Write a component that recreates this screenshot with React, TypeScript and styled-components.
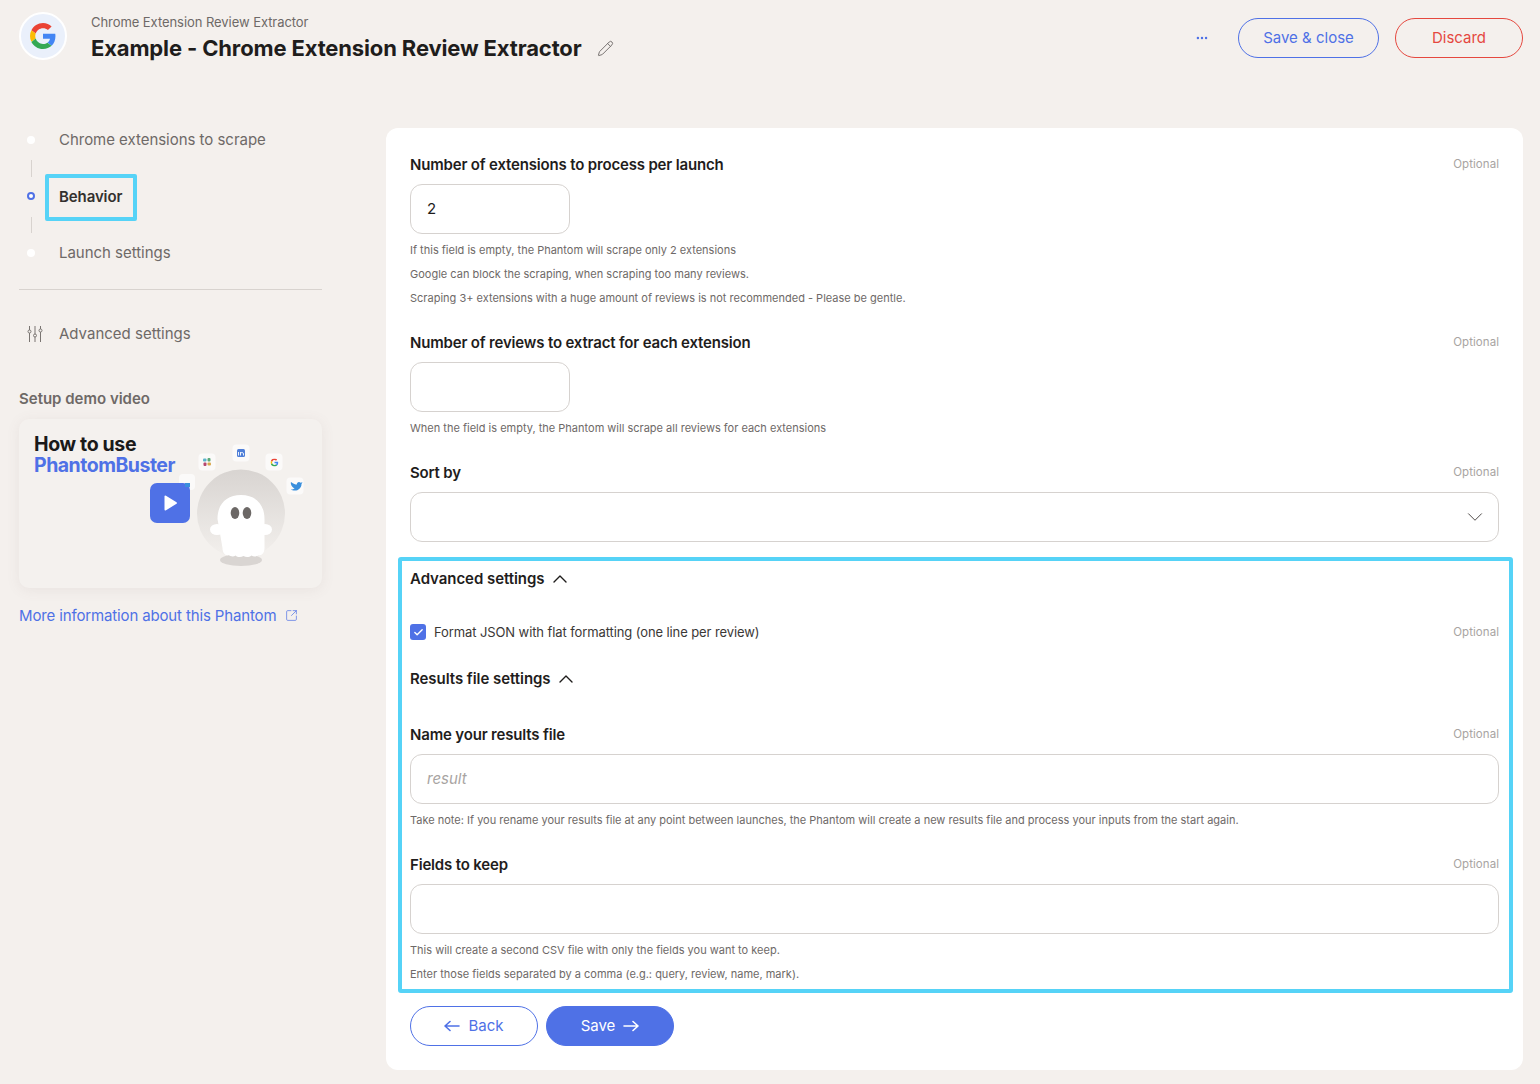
import React from "react";
import styled, { createGlobalStyle } from "styled-components";
import { Check, ChevronDown, ChevronUp, Ellipsis, Pencil, SquareArrowOutUpRight } from "lucide-react";

const BLUE = "#4f71e6";
const RED = "#e5483f";
const CYAN = "#56d3f7";
const INK = "#1f1d1c";
const GREY = "#6e6967";

const GlobalStyle = createGlobalStyle`
  html, body {
    margin: 0;
    padding: 0;
    background: #f4f0ed;
    color: ${INK};
    font-family: Inter, "Liberation Sans", sans-serif;
  }
  * { box-sizing: border-box; }
`;

const Page = styled.div`
  width: 1540px;
  height: 1084px;
  padding: 0 17px 14px 19px;
  overflow: hidden;
`;

const Header = styled.header`
  height: 128px;
  display: flex;
  align-items: flex-start;
`;

const Logo = styled.div`
  width: 48px;
  height: 48px;
  margin-top: 12px;
  border-radius: 50%;
  background: #eaf0fb;
  border: 2px solid #fff;
  display: flex;
  align-items: center;
  justify-content: center;
`;

const TitleBlock = styled.div`
  margin: 12px 0 0 24px;
`;

const Eyebrow = styled.div`
  font-size: 13px;
  line-height: 20px;
  letter-spacing: -0.06px;
  color: ${GREY};
`;

const TitleRow = styled.div`
  display: flex;
  align-items: center;
  height: 32px;
  gap: 15px;
`;

const Title = styled.h1`
  margin: 0;
  font-size: 22px;
  line-height: 32px;
  font-weight: 700;
  letter-spacing: -0.14px;
`;

const HeaderActions = styled.div`
  margin: 18px 0 0 auto;
  display: flex;
  align-items: center;
`;

const MoreButton = styled.div`
  display: flex;
  color: ${BLUE};
  margin-right: 29px;
`;

const PillButton = styled.button<{ $tone?: "blue" | "red" | "solid"; $width: number }>`
  width: ${p => p.$width}px;
  height: 40px;
  border-radius: 20px;
  font: inherit;
  font-size: 15px;
  display: inline-flex;
  align-items: center;
  justify-content: center;
  gap: 8px;
  padding: 0 0 1px;
  background: ${p => (p.$tone === "solid" ? BLUE : "transparent")};
  color: ${p => (p.$tone === "solid" ? "#fff" : p.$tone === "red" ? RED : BLUE)};
  border: 1px solid ${p => (p.$tone === "red" ? RED : BLUE)};
`;

const HeaderGap = styled.div`
  width: 16px;
`;

const Body = styled.div`
  display: flex;
  align-items: flex-start;
  gap: 64px;
`;

const Sidebar = styled.aside`
  width: 303px;
  flex: none;
`;

const StepRow = styled.div<{ $active?: boolean }>`
  height: 24px;
  padding: 0 0 1px 8px;
  display: flex;
  align-items: center;
  gap: 24px;
  font-size: 15px;
  letter-spacing: ${p => (p.$active ? "-0.1px" : "-0.03px")};
  font-weight: ${p => (p.$active ? 600 : 400)};
  color: ${p => (p.$active ? "#33302e" : GREY)};
`;

const StepDot = styled.span<{ $active?: boolean }>`
  width: 8px;
  height: 8px;
  border-radius: 50%;
  flex: none;
  background: #fff;
  border: ${p => (p.$active ? `2px solid ${BLUE}` : "none")};
`;

const Connector = styled.div`
  height: 32.5px;
  margin-left: 12px;
  padding: 8px 0;
  &::before {
    content: "";
    display: block;
    width: 1px;
    height: 100%;
    background: #d8d3cf;
  }
`;

const Highlighted = styled.span`
  position: relative;
  &::after {
    content: "";
    position: absolute;
    left: -14px;
    right: -14.5px;
    top: -13px;
    bottom: -15px;
    border: 4px solid ${CYAN};
    border-radius: 2px;
  }
`;

const Divider = styled.hr`
  border: 0;
  height: 1px;
  margin: 24px 0 32px;
  background: #d8d3cf;
`;

const AdvancedLink = styled.div`
  height: 24px;
  padding: 0 0 1px 8px;
  display: flex;
  align-items: center;
  gap: 16px;
  font-size: 15px;
  color: ${GREY};
`;

const DemoTitle = styled.div`
  margin-top: 41px;
  font-size: 15px;
  line-height: 24px;
  font-weight: 600;
  color: ${GREY};
`;

const Thumb = styled.div`
  position: relative;
  height: 169px;
  margin-top: 8px;
  padding: 15px;
  border-radius: 10px;
  background: #f4f1ee;
  box-shadow: 0 2px 14px rgba(120, 105, 95, 0.09);
`;

const ThumbLine = styled.div<{ $blue?: boolean }>`
  position: relative;
  font-size: 19.5px;
  line-height: 21px;
  font-weight: 700;
  letter-spacing: ${p => (p.$blue ? "-0.5px" : "-0.35px")};
  color: ${p => (p.$blue ? BLUE : "#1a1a1a")};
`;

const ThumbArt = styled.svg`
  position: absolute;
  left: 0;
  top: 0;
`;

const InfoLink = styled.div`
  margin-top: 16px;
  height: 24px;
  padding-bottom: 1px;
  display: flex;
  align-items: center;
  gap: 9px;
  font-size: 15px;
  letter-spacing: -0.14px;
  color: ${BLUE};
`;

const Card = styled.main`
  width: 1137px;
  height: 942px;
  padding: 25px 24px 24px;
  background: #fff;
  border-radius: 12px;
`;

const Optional = styled.span`
  font-size: 11.5px;
  letter-spacing: 0.05px;
  color: #a8a4a2;
`;

const LabelRow = styled.div`
  height: 24px;
  padding-bottom: 1px;
  display: flex;
  align-items: center;
  justify-content: space-between;
  & > ${Optional} {
    margin-bottom: 2px;
  }
`;

const Label = styled.label`
  font-size: 15px;
  font-weight: 600;
  letter-spacing: -0.17px;
  color: ${INK};
`;

const Field = styled.div`
  margin-bottom: 21px;
`;

const InputBox = styled.div<{ $narrow?: boolean }>`
  width: ${p => (p.$narrow ? "160px" : "100%")};
  height: 50px;
  margin: 7px 0 4px;
  padding: 0 16px 1px;
  border: 1px solid #d6d2cf;
  border-radius: 12px;
  display: flex;
  align-items: center;
  justify-content: space-between;
  font-size: 15px;
  color: ${INK};
`;

const SelectChevron = styled(ChevronDown)`
  margin-right: -6px;
`;

const Placeholder = styled.span`
  font-style: italic;
  color: #a8a4a2;
`;

const Hint = styled.div`
  font-size: 11px;
  line-height: 24px;
  color: ${GREY};
`;

const HighlightSection = styled.section`
  margin: 15px -14px 0 -12px;
  padding: 6px 10px 3px 8px;
  border: 4px solid ${CYAN};
  border-radius: 3px;
`;

const Collapsible = styled.div`
  height: 24px;
  padding-bottom: 1px;
  display: flex;
  align-items: center;
  gap: 3px;
  font-size: 15px;
  font-weight: 600;
  letter-spacing: -0.05px;
`;

const CheckRow = styled.div`
  height: 24px;
  margin: 29px 0 23px;
  display: flex;
  align-items: center;
  justify-content: space-between;
`;

const CheckLabel = styled.div`
  display: flex;
  align-items: center;
  gap: 8px;
  font-size: 13px;
  letter-spacing: -0.1px;
  color: #3b3836;
`;

const CheckBox = styled.span`
  width: 16px;
  height: 16px;
  border-radius: 3px;
  background: ${BLUE};
  color: #fff;
  display: flex;
  align-items: center;
  justify-content: center;
`;

const SubFields = styled.div`
  margin-top: 32px;
  & > ${Field}:last-child {
    margin-bottom: 0;
  }
`;

const Footer = styled.div`
  margin-top: 13px;
  display: flex;
  gap: 8px;
`;

const GooglePaths = () => (
  <>
    <path fill="#EA4335" d="M24 9.500c3.500 0 6.600 1.200 9.100 3.600l6.800-6.800C35.800 2.400 30.300 0 24 0 14.600 0 6.500 5.400 2.600 13.200l7.900 6.200C12.400 13.600 17.700 9.500 24 9.500z" />
    <path fill="#4285F4" d="M47 24.500c0-1.600-.1-3.100-.4-4.500H24v9h12.900c-.6 3-2.200 5.500-4.700 7.200l7.600 5.900C44.300 37.900 47 31.800 47 24.500z" />
    <path fill="#FBBC05" d="M10.500 28.600c-.5-1.400-.8-3-.8-4.600s.3-3.200.8-4.600l-7.900-6.200C.9 16.500 0 20.100 0 24s.9 7.500 2.600 10.800l7.900-6.200z" />
    <path fill="#34A853" d="M24 48c6.500 0 11.900-2.100 15.800-5.800l-7.600-5.900c-2.100 1.400-4.900 2.300-8.200 2.300-6.300 0-11.600-4.200-13.500-9.900l-7.900 6.200C6.500 42.600 14.600 48 24 48z" />
  </>
);

const GoogleG = () => (
  <svg width="26" height="26" viewBox="0 0 48 48">
    <GooglePaths />
  </svg>
);

const SlidersIcon = () => (
  <svg width="16" height="18" viewBox="0 0 16 18" fill="none" stroke="#7a7572" strokeWidth="1">
    <path d="M2.500 1v4M2.500 8v9M8 1v8M8 12v5M13.500 1v3M13.500 7v10" />
    <circle cx="2.500" cy="6.500" r="1.500" />
    <circle cx="8" cy="10.500" r="1.500" />
    <circle cx="13.500" cy="5.500" r="1.500" />
  </svg>
);

const ArrowIcon = ({ left }: { left?: boolean }) => (
  <svg width="16" height="12" viewBox="0 0 16 12" fill="none" stroke="currentColor" strokeWidth="1.6" strokeLinecap="round" strokeLinejoin="round">
    <path d={left ? "M15 6H1M6 1.500 1 6l5 4.500" : "M1 6h14M10 1.500 15 6l-5 4.500"} />
  </svg>
);

const DemoArt = () => (
  <ThumbArt width="303" height="169" viewBox="0 0 303 169">
    <defs>
      <linearGradient id="halo" x1="0" y1="0" x2="0" y2="1">
        <stop offset="0" stopColor="#d8d4d1" />
        <stop offset="1" stopColor="#f3f0ed" />
      </linearGradient>
    </defs>
    <circle cx="222" cy="94.500" r="44" fill="url(#halo)" />
    <ellipse cx="222" cy="141" rx="21" ry="6" fill="#d9d5d2" />

    <rect x="179.500" y="34.500" width="17" height="17" rx="4" fill="#fbfaf9" />
    <rect x="184" y="39.500" width="3.500" height="3" rx="1" fill="#5cb5c9" />
    <rect x="188.500" y="39" width="3" height="3.500" rx="1" fill="#5aa877" />
    <rect x="184.500" y="43.500" width="3" height="3.500" rx="1" fill="#b5476f" />
    <rect x="188.500" y="43.500" width="3.500" height="3" rx="1" fill="#d9a94f" />

    <rect x="213.500" y="25.500" width="17" height="17" rx="4" fill="#fbfaf9" />
    <rect x="218" y="30" width="8" height="8" rx="1.500" fill="#4f7fd8" />
    <path d="M219.500 33v3.500M221.500 36.500v-3.500M221.500 34.500c.6-1.400 3-1.400 3 .5v1.500" stroke="#fff" strokeWidth=".9" fill="none" />

    <rect x="246.500" y="34.500" width="17" height="17" rx="4" fill="#fbfaf9" />
    <svg x="251.500" y="39.500" width="8" height="8" viewBox="0 0 48 48">
      <GooglePaths />
    </svg>

    <rect x="267.500" y="58.500" width="17" height="17" rx="4" fill="#fbfaf9" />
    <path d="M272 63c2.500 2 4.500 2.500 5.800 2.500 0-2.400 2.300-3.200 3.800-1.800l1.900-.5-1 1.800c0 4-3.300 6.600-6.500 6.600-2 0-3.200-.5-4.200-1.100 1.800 0 3-.5 3.800-1.300-1.800-.5-3-2-3.600-4-.3-1-.3-1.600 0-2.200z" fill="#3a8fdc" />

    <rect x="160" y="55" width="16" height="16" rx="4" fill="#fbfaf9" />
    <rect x="131" y="64" width="40" height="40" rx="7" fill={BLUE} />
    <rect x="166" y="64" width="5" height="4" fill="#3a8fdc" />
    <path d="M145.500 77.500v13a1 1 0 0 0 1.500.8l10.500-6.500a1 1 0 0 0 0-1.600L147 76.700a1 1 0 0 0-1.500.8z" fill="#fff" />

    <ellipse cx="198" cy="110.500" rx="7" ry="5.500" fill="#fff" />
    <ellipse cx="246" cy="110.500" rx="7" ry="5.500" fill="#fff" />
    <path d="M198.500 100c0-15 9-24 23.500-24s23.500 9 23.500 24v29c0 5-3 8-6 7-2 1.800-5 2-7 .5-2.500 2-5.500 2-8 .5-2.500 1.600-6 1.500-8-.5-2 1.500-5 1-7-.5-3 1-6-2-6-7z" fill="#fff" />
    <ellipse cx="216" cy="94" rx="4.300" ry="6" fill="#6c6866" />
    <ellipse cx="228" cy="94" rx="4.300" ry="6" fill="#6c6866" />
  </ThumbArt>
);

export default function App() {
  return (
    <>
      <GlobalStyle />
      <Page>
        <Header>
          <Logo>
            <GoogleG />
          </Logo>
          <TitleBlock>
            <Eyebrow>Chrome Extension Review Extractor</Eyebrow>
            <TitleRow>
              <Title>Example - Chrome Extension Review Extractor</Title>
              <Pencil size={17} strokeWidth={1.3} color="#6e6967" />
            </TitleRow>
          </TitleBlock>
          <HeaderActions>
            <MoreButton>
              <Ellipsis size={14} strokeWidth={2.2} />
            </MoreButton>
            <PillButton $width={141}>Save &amp; close</PillButton>
            <HeaderGap />
            <PillButton $tone="red" $width={128}>
              Discard
            </PillButton>
          </HeaderActions>
        </Header>
        <Body>
          <Sidebar>
            <StepRow>
              <StepDot />
              Chrome extensions to scrape
            </StepRow>
            <Connector />
            <StepRow $active>
              <StepDot $active />
              <Highlighted>Behavior</Highlighted>
            </StepRow>
            <Connector />
            <StepRow>
              <StepDot />
              Launch settings
            </StepRow>
            <Divider />
            <AdvancedLink>
              <SlidersIcon />
              Advanced settings
            </AdvancedLink>
            <DemoTitle>Setup demo video</DemoTitle>
            <Thumb>
              <DemoArt />
              <ThumbLine>How to use</ThumbLine>
              <ThumbLine $blue>PhantomBuster</ThumbLine>
            </Thumb>
            <InfoLink>
              More information about this Phantom
              <SquareArrowOutUpRight size={13} strokeWidth={1.3} />
            </InfoLink>
          </Sidebar>
          <Card>
            <Field>
              <LabelRow>
                <Label>Number of extensions to process per launch</Label>
                <Optional>Optional</Optional>
              </LabelRow>
              <InputBox $narrow>2</InputBox>
              <Hint>If this field is empty, the Phantom will scrape only 2 extensions</Hint>
              <Hint>Google can block the scraping, when scraping too many reviews.</Hint>
              <Hint>Scraping 3+ extensions with a huge amount of reviews is not recommended - Please be gentle.</Hint>
            </Field>
            <Field>
              <LabelRow>
                <Label>Number of reviews to extract for each extension</Label>
                <Optional>Optional</Optional>
              </LabelRow>
              <InputBox $narrow />
              <Hint>When the field is empty, the Phantom will scrape all reviews for each extensions</Hint>
            </Field>
            <LabelRow>
              <Label>Sort by</Label>
              <Optional>Optional</Optional>
            </LabelRow>
            <InputBox>
              <span />
              <SelectChevron size={26} strokeWidth={0.9} color="#4a4644" />
            </InputBox>
            <HighlightSection>
              <Collapsible>
                Advanced settings
                <ChevronUp size={24} strokeWidth={1.4} />
              </Collapsible>
              <CheckRow>
                <CheckLabel>
                  <CheckBox>
                    <Check size={11} strokeWidth={3} />
                  </CheckBox>
                  Format JSON with flat formatting (one line per review)
                </CheckLabel>
                <Optional>Optional</Optional>
              </CheckRow>
              <Collapsible>
                Results file settings
                <ChevronUp size={24} strokeWidth={1.4} />
              </Collapsible>
              <SubFields>
                <Field>
                  <LabelRow>
                    <Label>Name your results file</Label>
                    <Optional>Optional</Optional>
                  </LabelRow>
                  <InputBox>
                    <Placeholder>result</Placeholder>
                  </InputBox>
                  <Hint>
                    Take note: If you rename your results file at any point between launches, the Phantom will create a
                    new results file and process your inputs from the start again.
                  </Hint>
                </Field>
                <Field>
                  <LabelRow>
                    <Label>Fields to keep</Label>
                    <Optional>Optional</Optional>
                  </LabelRow>
                  <InputBox />
                  <Hint>This will create a second CSV file with only the fields you want to keep.</Hint>
                  <Hint>Enter those fields separated by a comma (e.g.: query, review, name, mark).</Hint>
                </Field>
              </SubFields>
            </HighlightSection>
            <Footer>
              <PillButton $width={128}>
                <ArrowIcon left />
                Back
              </PillButton>
              <PillButton $tone="solid" $width={128}>
                Save
                <ArrowIcon />
              </PillButton>
            </Footer>
          </Card>
        </Body>
      </Page>
    </>
  );
}
